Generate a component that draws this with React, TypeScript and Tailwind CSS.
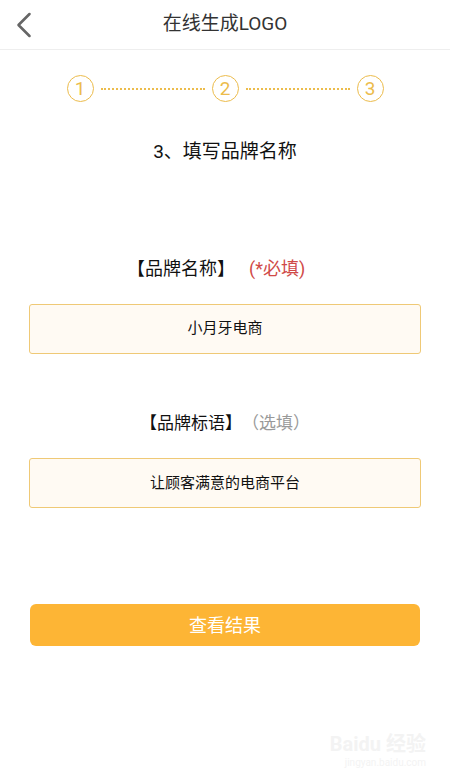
import { ChevronLeft } from "lucide-react";

const font = { fontFamily: '"Roboto", "Noto Sans CJK SC", sans-serif' };

function Step({ n }: { n: number }) {
  return (
    <div className="flex items-center justify-center w-[27px] h-[27px] rounded-full border-[1.5px] border-[#ecbc4c] text-[#ecbc4c] text-[19px] leading-none">
      {n}
    </div>
  );
}

function Dots() {
  return <div className="w-[104px] mx-[7px] border-t-2 border-dotted border-[#ecbc4c]" />;
}

export default function App() {
  return (
    <main className="w-[450px] h-[779px] bg-white text-[#222] flex flex-col relative" style={font}>
      {/* Header */}
      <div className="h-[50px] flex items-center justify-center relative border-b border-[#eeeeee]">
        <ChevronLeft className="absolute left-[2px] top-[3px] w-[44px] h-[44px] text-[#666]" strokeWidth={1.4} />
        <span className="text-[19px] text-[#333]">在线生成LOGO</span>
      </div>

      {/* Steps */}
      <div className="flex items-center justify-center mt-[25px]">
        <Step n={1} />
        <Dots />
        <Step n={2} />
        <Dots />
        <Step n={3} />
      </div>

      <div className="text-center text-[19px] text-[#111] mt-[36px]">3、填写品牌名称</div>

      {/* Brand name */}
      <div className="flex items-center pl-[127px] mt-[88px] text-[18px]">
        <span className="text-[#111]">【品牌名称】</span>
        <span className="text-[#d04a48] ml-[14px]">(*必填)</span>
      </div>
      <div className="mx-[29px] mt-[22px] h-[50px] rounded-[3px] border border-[#efc976] bg-[#fffaf3] flex items-center justify-center text-[15px] text-[#111]">
        小月牙电商
      </div>

      {/* Slogan */}
      <div className="flex justify-center mt-[57px] text-[17px]">
        <span className="text-[#111]">【品牌标语】</span>
        <span className="text-[#999]">（选填）</span>
      </div>
      <div className="mx-[29px] mt-[22px] h-[50px] rounded-[3px] border border-[#efc976] bg-[#fffaf3] flex items-center justify-center text-[15px] text-[#111]">
        让顾客满意的电商平台
      </div>

      <button className="mx-[30px] mt-[96px] h-[42px] rounded-[6px] bg-[#fdb535] text-white text-[18px]">
        查看结果
      </button>

      <div className="absolute right-[24px] bottom-[10px] text-right text-[#f3f3f3] leading-tight">
        <div className="text-[20px] font-bold">Baidu 经验</div>
        <div className="text-[10px]">jingyan.baidu.com</div>
      </div>
    </main>
  );
}
